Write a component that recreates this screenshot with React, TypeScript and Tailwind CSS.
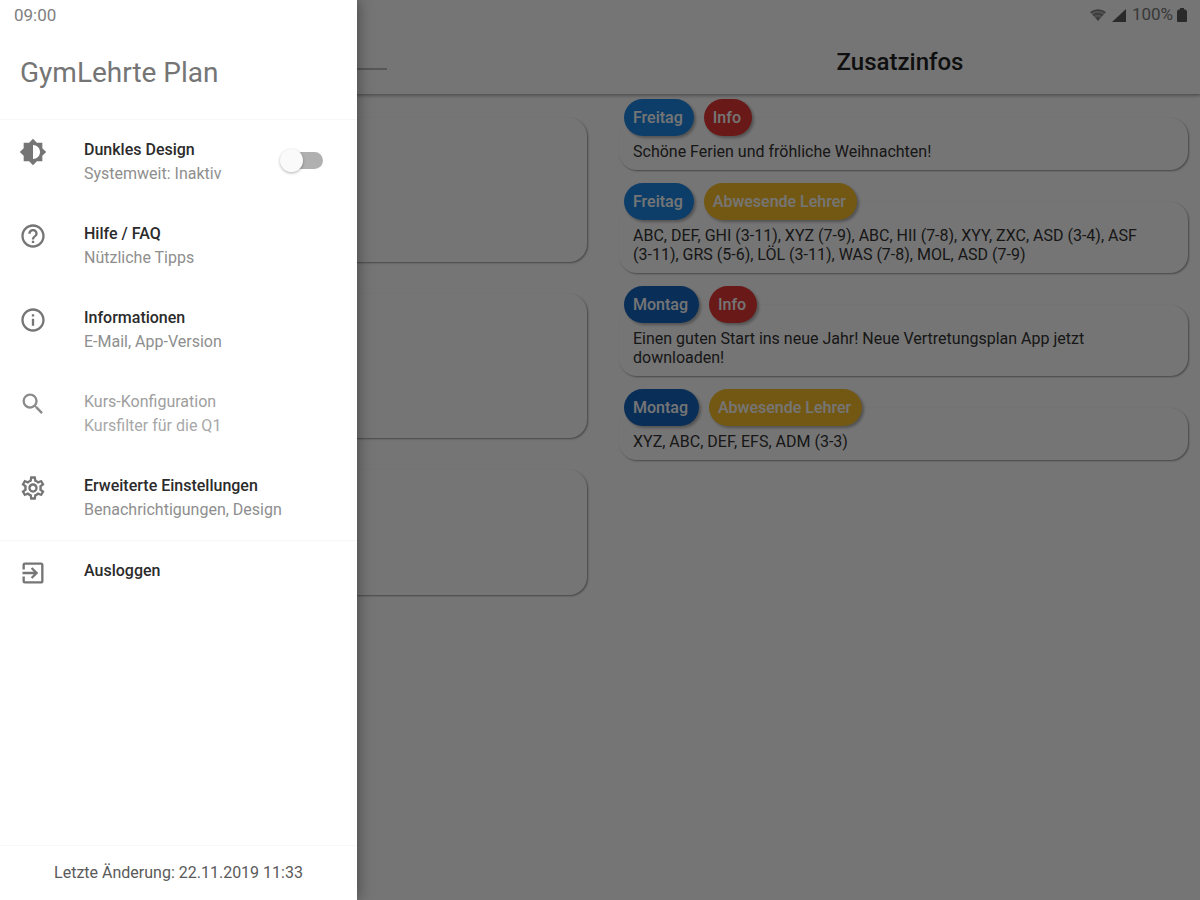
import type { ReactNode } from "react";
import {
  MdBrightnessMedium,
  MdExitToApp,
  MdHelpOutline,
  MdInfoOutline,
  MdOutlineSettings,
  MdSearch,
} from "react-icons/md";

const tones = {
  friday: "bg-[#1e88e5]",
  monday: "bg-[#1565c0]",
  info: "bg-[#e53935]",
  absent: "bg-[#fbc02d]",
};

type Tone = keyof typeof tones;

type Note = { day: string; dayTone: Tone; kind: string; kindTone: Tone; text: string };

const notes: Note[] = [
  { day: "Freitag", dayTone: "friday", kind: "Info", kindTone: "info", text: "Schöne Ferien und fröhliche Weihnachten!" },
  {
    day: "Freitag",
    dayTone: "friday",
    kind: "Abwesende Lehrer",
    kindTone: "absent",
    text: "ABC, DEF, GHI (3-11), XYZ (7-9), ABC, HII (7-8), XYY, ZXC, ASD (3-4), ASF (3-11), GRS (5-6), LÖL (3-11), WAS (7-8), MOL, ASD (7-9)",
  },
  {
    day: "Montag",
    dayTone: "monday",
    kind: "Info",
    kindTone: "info",
    text: "Einen guten Start ins neue Jahr! Neue Vertretungsplan App jetzt downloaden!",
  },
  { day: "Montag", dayTone: "monday", kind: "Abwesende Lehrer", kindTone: "absent", text: "XYZ, ABC, DEF, EFS, ADM (3-3)" },
];

function WifiIcon() {
  return (
    <svg viewBox="0 0 16 12" className="h-3 w-4" aria-hidden="true">
      <path d="M0 3.2C4.6-.8 11.4-.8 16 3.2L8 12Z" fill="#b0b0b0" />
      <path d="M.8 3.6C5 .2 11 .2 15.2 3.6M3.4 6.4c2.8-2 6.4-2 9.2 0" fill="none" stroke="#7c7c7c" strokeWidth="1.3" />
      <path d="M5.6 8.4c1.5-1 3.3-1 4.8 0L8 12Z" fill="#858585" />
    </svg>
  );
}

function SignalIcon() {
  return (
    <svg viewBox="0 0 14 13" className="h-[13px] w-[14px]" aria-hidden="true">
      <path d="M0 13 14 0v13Z" fill="#5c5c5c" />
    </svg>
  );
}

function BatteryIcon() {
  return (
    <svg viewBox="0 0 10 14" className="h-[14px] w-[10px]" aria-hidden="true">
      <path d="M3 0h4v1.6h1.6L10 3v10a1 1 0 0 1-1 1H1a1 1 0 0 1-1-1V3l1.4-1.4H3Z" fill="#5c5c5c" />
    </svg>
  );
}

function Pill({ tone, children }: { tone: Tone; children: ReactNode }) {
  return (
    <span
      className={`flex h-[37px] items-center rounded-full pr-[11px] pl-[9px] text-base font-medium text-white shadow-[2px_2px_3px_rgba(0,0,0,0.3)] ${tones[tone]}`}
    >
      {children}
    </span>
  );
}

function NoteCard({ note }: { note: Note }) {
  return (
    <article>
      <div className="relative flex gap-[10px] px-[5px]">
        <Pill tone={note.dayTone}>{note.day}</Pill>
        <Pill tone={note.kindTone}>{note.kind}</Pill>
      </div>
      <p className="-mt-[18px] rounded-[18px] bg-white pt-6 pr-9 pb-[9px] pl-[14px] text-base leading-[19px] text-[#333333] shadow-[1px_1px_2px_rgba(0,0,0,0.4)]">
        {note.text}
      </p>
    </article>
  );
}

function LessonCard({ tall }: { tall: boolean }) {
  return (
    <article className="pt-[19px]">
      <div
        className={`rounded-[18px] bg-white shadow-[1px_1px_2px_rgba(0,0,0,0.4)] ${tall ? "h-[144px]" : "h-[125px]"}`}
      />
    </article>
  );
}

function MenuItem({
  icon,
  title,
  subtitle,
  disabled,
}: {
  icon: ReactNode;
  title: string;
  subtitle?: string;
  disabled?: boolean;
}) {
  return (
    <button
      type="button"
      disabled={disabled}
      className="flex w-full items-start gap-[37px] px-[19px] py-[18px] text-left text-[#757575] disabled:text-[#8a8a8a]"
    >
      <span className="text-[28px]">{icon}</span>
      <span className="flex flex-col text-base leading-6">
        <span className={disabled ? "font-normal text-[#9e9e9e]" : "font-medium text-[#2b2b2b]"}>{title}</span>
        {subtitle && <span className={disabled ? "text-[#a8a8a8]" : "text-[#8e8e8e]"}>{subtitle}</span>}
      </span>
    </button>
  );
}

function Drawer() {
  return (
    <aside className="absolute inset-y-0 left-0 flex w-[357px] flex-col bg-white shadow-[1px_0_14px_rgba(0,0,0,0.4)]">
      <time className="px-[14px] pt-[3px] text-[17px] leading-6 text-[#808080]">09:00</time>
      <h1 className="border-b border-[#f7f7f7] px-5 py-7 text-[28px] leading-9 text-[#757575]">GymLehrte Plan</h1>
      <nav className="flex grow flex-col">
        <label className="flex items-start gap-[37px] px-[19px] py-[18px] text-[#757575]">
          <MdBrightnessMedium className="size-7" />
          <span className="flex grow flex-col text-base leading-6">
            <span className="font-medium text-[#2b2b2b]">Dunkles Design</span>
            <span className="text-[#8e8e8e]">Systemweit: Inaktiv</span>
          </span>
          <input
            type="checkbox"
            role="switch"
            className="relative mt-[14px] mr-[15px] h-[17px] w-[38px] appearance-none rounded-full bg-[#b0b0b0] before:absolute before:-top-[3px] before:-left-[5px] before:size-[23px] before:rounded-full before:bg-[#fafafa] before:shadow-[0_1px_3px_rgba(0,0,0,0.3)] checked:before:left-[20px]"
          />
        </label>
        <MenuItem icon={<MdHelpOutline />} title="Hilfe / FAQ" subtitle="Nützliche Tipps" />
        <MenuItem icon={<MdInfoOutline />} title="Informationen" subtitle="E-Mail, App-Version" />
        <MenuItem icon={<MdSearch />} title="Kurs-Konfiguration" subtitle="Kursfilter für die Q1" disabled />
        <MenuItem icon={<MdOutlineSettings />} title="Erweiterte Einstellungen" subtitle="Benachrichtigungen, Design" />
        <div className="border-t border-[#f7f7f7]">
          <MenuItem icon={<MdExitToApp />} title="Ausloggen" />
        </div>
      </nav>
      <footer className="border-t border-[#f7f7f7] py-4 text-center text-base leading-[22px] text-[#5a5a5a]">
        Letzte Änderung: 22.11.2019 11:33
      </footer>
    </aside>
  );
}

export default function App() {
  return (
    <div className="relative flex min-h-screen flex-col bg-white font-['Roboto',sans-serif]">
      <header className="border-b border-[#bdbdbd] shadow-[0_1px_3px_rgba(0,0,0,0.3)]">
        <div className="flex h-[30px] items-center justify-end gap-[6px] pr-[13px] text-[17px] text-[#7c7c7c]">
          <WifiIcon />
          <SignalIcon />
          <span className="flex items-center gap-1">
            100%
            <BatteryIcon />
          </span>
        </div>
        <div className="grid h-16 grid-cols-2">
          <div className="flex items-start justify-center">
            <div className="h-10 w-[174px] border-b-2 border-[#bdbdbd]" />
          </div>
          <h2 className="pt-4 text-center text-2xl leading-8 font-medium text-[#212121]">Zusatzinfos</h2>
        </div>
      </header>
      <main className="grid grow grid-cols-2">
        <section className="flex flex-col gap-[13px] py-1 pr-[13px] pl-[19px]">
          <LessonCard tall />
          <LessonCard tall />
          <LessonCard tall={false} />
        </section>
        <section className="flex flex-col gap-[13px] py-1 pr-3 pl-[19px]">
          {notes.map((note) => (
            <NoteCard key={note.text} note={note} />
          ))}
        </section>
      </main>
      <div className="absolute inset-0 bg-black/54" />
      <Drawer />
    </div>
  );
}
